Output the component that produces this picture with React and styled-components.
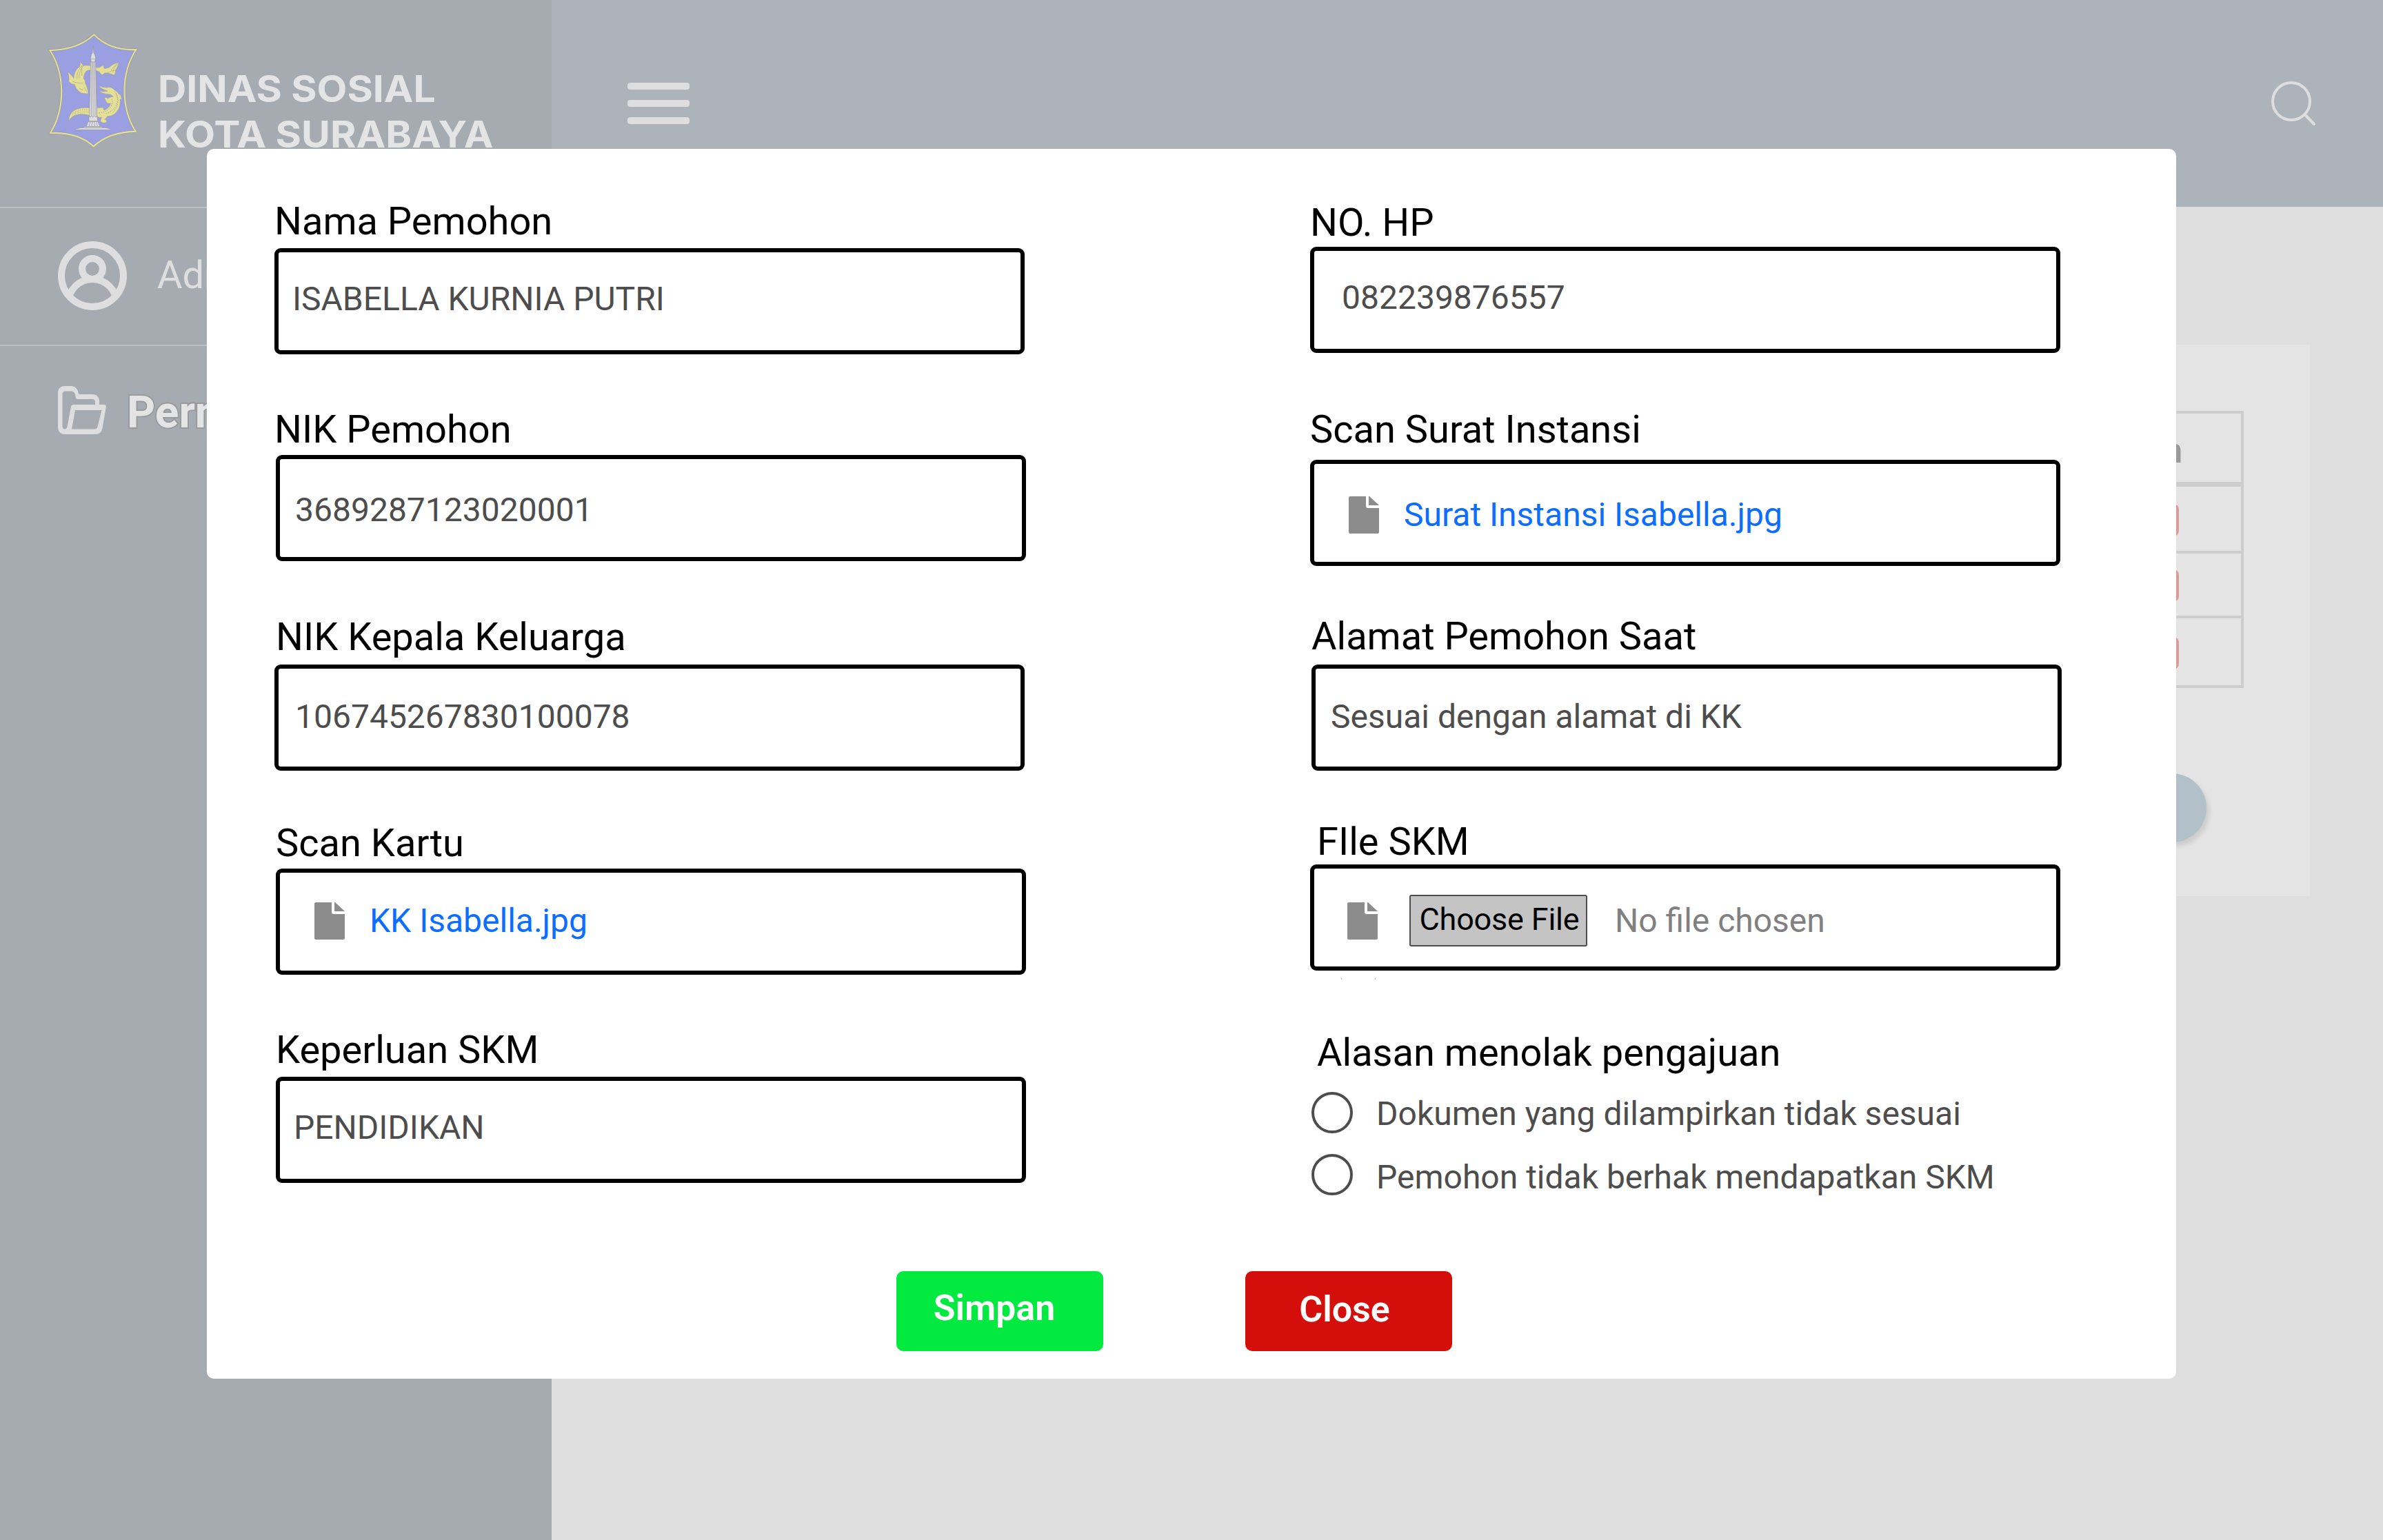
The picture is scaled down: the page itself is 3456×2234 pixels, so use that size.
import React from "react";
import styled, { createGlobalStyle } from "styled-components";

const Global = createGlobalStyle`
  * { box-sizing: border-box; }
  body {
    margin: 0;
    background: #dedede;
    font-family: Roboto, "Liberation Sans", sans-serif;
  }
`;

/* ---------- page shell ---------- */
const Page = styled.div`
  position: relative;
  display: flex;
  width: 3456px;
  height: 2234px;
  overflow: hidden;
`;
const Sidebar = styled.aside`
  flex: none;
  width: 800px;
  background: #a6abb2;
`;
const Brand = styled.div`
  display: flex;
  height: 302px;
  padding: 48px 0 0 70px;
  border-bottom: 2px solid #bdbfc1;
`;
const BrandName = styled.div`
  display: flex;
  flex-direction: column;
  align-items: flex-start;
  padding: 48px 0 0 29px;
  font: 700 53px/66px Inter, sans-serif;
  color: #e4e4e4;
`;
const BrandLine = styled.span`
  white-space: nowrap;
  transform: scaleX(${(p) => p.$stretch});
  transform-origin: left;
`;
const UserRow = styled.div`
  display: flex;
  align-items: center;
  gap: 44px;
  height: 200px;
  padding: 0 0 2px 84px;
  border-bottom: 2px solid #bdbfc1;
  font-size: 56px;
  color: #dedede;
`;
const UserName = styled.span`
  padding-bottom: 2px;
`;
const MenuRow = styled.div`
  display: flex;
  align-items: center;
  gap: 30px;
  height: 70px;
  margin: 58px 0 0 84px;
  color: #e4e4e4;
`;
const MenuText = styled.span`
  padding-top: 6px;
  font-size: 64px;
  font-weight: 700;
  -webkit-text-stroke: 4px #999a9b;
  paint-order: stroke fill;
`;
const Main = styled.main`
  display: flex;
  flex: 1;
  flex-direction: column;
  min-width: 0;
`;
const Header = styled.header`
  display: flex;
  align-items: center;
  justify-content: space-between;
  height: 300px;
  padding: 0 98px 0 110px;
  background: #adb3ba;
`;
const Burger = styled.div`
  display: flex;
  flex-direction: column;
  gap: 15px;
  width: 90px;
`;
const BurgerBar = styled.span`
  height: 10px;
  border-radius: 4px;
  background: #dedede;
`;
const Card = styled.section`
  display: flex;
  flex-direction: column;
  align-items: flex-end;
  height: 800px;
  margin: 200px 106px 0 50px;
  padding: 96px 96px 0;
  background: #e4e4e4;
`;
const Table = styled.div`
  width: 100%;
  border: 4px solid #cdcdcd;
`;
const TableRow = styled.div`
  display: flex;
  align-items: center;
  justify-content: flex-end;
  height: ${(p) => p.$height}px;
  padding-right: ${(p) => p.$end}px;
  border-bottom: ${(p) => p.$line}px solid #cdcdcd;
`;
const HeadText = styled.span`
  padding-top: 8px;
  font-size: 50px;
  font-weight: 700;
  color: #999;
`;
const RejectTag = styled.span`
  width: 160px;
  height: 47px;
  margin-top: ${(p) => p.$drop}px;
  border-radius: 8px;
  background: #d99c9c;
`;
const Pill = styled.span`
  width: 300px;
  height: 100px;
  margin: 124px 54px 0 0;
  border-radius: 50px;
  background: #b2c1c9;
  box-shadow: 4px 6px 6px rgba(0, 0, 0, 0.1);
`;

/* ---------- dialog ---------- */
const Dialog = styled.div`
  position: absolute;
  left: 300px;
  top: 216px;
  width: 2856px;
  height: 1784px;
  border-radius: 10px;
  background: #fff;
`;
const Columns = styled.div`
  display: flex;
  gap: 412px;
  height: 1628px;
  padding: 72px 0 0 98px;
`;
const Column = styled.div`
  display: flex;
  flex-direction: column;
  width: 1090px;
  padding-top: ${(p) => p.$top || 0}px;
`;
const FieldWrap = styled.div`
  margin-bottom: ${(p) => p.$after}px;
`;
const Label = styled.div`
  height: 66px;
  padding-left: ${(p) => p.$indent || 0}px;
  font-size: 56px;
  line-height: 66px;
  color: #000;
  white-space: nowrap;
`;
const Box = styled.div`
  display: flex;
  align-items: center;
  width: 1088px;
  height: 154px;
  margin: ${(p) => p.$gap}px 0 0 ${(p) => p.$shift || 0}px;
  padding: ${(p) => p.$drop || 0}px 0 ${(p) => p.$lift || 0}px ${(p) => p.$inset}px;
  border: 6px solid #000;
  border-radius: 9px;
`;
const Value = styled.span`
  font-size: 48px;
  line-height: 56px;
  color: #4d4d4d;
  white-space: nowrap;
`;
const FileLink = styled(Value)`
  margin-left: 36px;
  color: #0d6efd;
`;
const ChooseButton = styled.button`
  width: 258px;
  height: 75px;
  margin: 0 40px 0 46px;
  padding: 0 0 4px 3px;
  border: 2px solid #4d4d4d;
  border-radius: 3px;
  background: #c4c4c4;
  font: 400 45px/54px Roboto, sans-serif;
  letter-spacing: -0.2px;
  color: #000;
  white-space: nowrap;
`;
const Hint = styled(Value)`
  color: #808080;
`;
const Ticks = styled.div`
  display: flex;
  justify-content: space-between;
  width: 50px;
  height: 3px;
  margin: -76px 0 73px 45px;
`;
const Tick = styled.i`
  width: 1px;
  height: 3px;
  background: #b5b5b5;
  transform: skewX(${(p) => p.$lean}deg);
`;
const RadioRow = styled.label`
  display: flex;
  align-items: center;
  gap: 34px;
  height: 60px;
  margin: ${(p) => p.$before}px 0 0 2px;
`;
const Radio = styled.span`
  flex: none;
  width: 60px;
  height: 60px;
  border: 4px solid #4d4d4d;
  border-radius: 50%;
`;
const RadioText = styled(Value)`
  padding-top: ${(p) => p.$drop}px;
`;
const Actions = styled.div`
  display: flex;
  gap: 206px;
  padding-left: 1000px;
`;
const Action = styled.button`
  width: 300px;
  height: 116px;
  padding: 0 ${(p) => p.$right}px ${(p) => p.$lift}px 0;
  border: 0;
  border-radius: 10px;
  background: ${(p) => p.$color};
  font: 600 52px/60px Roboto, sans-serif;
  color: #fff;
`;

/* ---------- drawings ---------- */
function Crest() {
  return (
    <svg width="130" height="167" viewBox="90 54 390 501" fill="none">
      <path
        d="M289 61C334 107 391 130 472 126C405 229 405 378 470 482C398 484 335 503 287 547C241 505 178 486 99 489C164 384 164 230 97 129C180 128 241 106 289 61Z"
        fill="#999fe0" stroke="#93979c" strokeWidth="10" />
      <path
        d="M289 61C334 107 391 130 472 126C405 229 405 378 470 482C398 484 335 503 287 547C241 505 178 486 99 489C164 384 164 230 97 129C180 128 241 106 289 61Z"
        stroke="#e4df96" strokeWidth="6.5" />
      <g fill="#e4df96" stroke="#a5a58f" strokeWidth="2" strokeLinejoin="round">
        <path d="M275 196C262 194 252 194 242 196C239 190 234 184 228 179C229 188 229 194 227 200C213 208 202 226 201 251C195 240 185 230 174 223C180 240 182 252 179 263C185 273 193 276 204 277C208 291 217 305 232 314C243 317 254 317 264 318C263 300 259 285 251 272C252 264 249 258 244 252C245 235 251 221 261 216L275 216Z" />
        <path d="M296 203C304 204 312 204 316 202C320 197 326 195 333 196C330 201 331 205 335 208C346 208 356 204 364 196C374 188 384 185 397 183C393 196 388 208 383 216C383 225 381 232 376 238C366 232 355 229 345 228C335 226 329 231 327 237C320 234 316 229 312 223C306 220 301 217 296 217Z" />
        <path d="M307 283C320 288 333 291 344 291C358 287 369 291 376 300C387 307 395 314 398 320C406 322 408 330 409 343L402 342C405 365 399 384 386 399C375 412 359 417 347 416C345 422 339 427 335 429C343 432 346 437 343 443L332 445C326 445 322 443 317 439C317 432 320 427 322 422C314 421 307 420 301 418V379L331 378C329 386 330 388 335 389C350 382 359 372 361 360H349C342 355 337 345 334 334C341 334 346 336 350 339C356 333 365 330 372 331C369 324 361 320 351 320C336 319 320 314 309 306C324 308 337 309 348 306C333 302 318 294 307 283Z" />
        <path d="M271 380C244 377 219 381 204 390C188 400 179 415 180 437C188 421 198 413 213 410C231 404 251 407 271 413Z" />
      </g>
      <g stroke="#a5a58f" strokeWidth="2">
        <path d="M236 194V240M232 200C220 215 214 232 214 254M242 196C229 215 224 232 225 248M195 264C210 270 225 274 240 272M224 294L240 303M247 290L257 310M238 297V300" />
        <path d="M371 224C374 210 382 198 391 189M363 218C370 205 380 195 391 189M345 228C359 222 371 216 383 216" />
        <path d="M378 308C393 325 395 350 384 371C374 389 357 401 336 405M366 342C374 357 366 374 350 388C338 397 322 401 306 402M387 318C399 345 393 375 373 397" strokeDasharray="4 5" strokeWidth="3" />
        <path d="M264 388C238 386 210 391 193 408M264 398C240 396 218 398 202 407" strokeDasharray="2 6" strokeWidth="5" />
      </g>
      <g fill="#dfdfe1" stroke="#92939a" strokeWidth="2">
        <path d="M285 108L288 140L293 149L296 164L293 180H277L274 164L277 149L282 140Z" />
        <path d="M274 180H296L301 418H269Z" />
        <path d="M267 415L273 420L279 414L285 420L291 414L297 420L304 415V437H267Z" />
        <path d="M264 439H306L315 461H255Z" />
        <path d="M245 461H325V466H245Z" />
        <path d="M232 466H340L364 472V475H207V472Z" />
      </g>
      <path d="M280 181L277 414M285 181V414M291 181L294 414M272 440L267 460M281 440L279 460M290 440L292 460M299 440L304 460M276 167H295" stroke="#a9a9af" strokeWidth="3" />
    </svg>
  );
}

function UserIcon() {
  return (
    <svg width="100" height="100" viewBox="0 0 20 20" fill="none" stroke="#dedede" strokeWidth="2">
      <clipPath id="ring"><circle cx="10" cy="10" r="9.5" /></clipPath>
      <circle cx="10" cy="10" r="9" />
      <circle cx="10" cy="8" r="3" />
      <circle cx="10" cy="18" r="7" clipPath="url(#ring)" />
    </svg>
  );
}

function FolderIcon() {
  return (
    <svg width="70" height="70" viewBox="0 0 70 70">
      <path
        fill="#dedede" fillRule="evenodd"
        d="M10 0H19C25 0 28.500 4 29.500 9L30.500 12H50C56 12 60 16 60 22V27H66.500C69 27 70.300 28.500 69.800 31L64.500 61C63.500 67 60 70 54 70H10C4 70 0 66 0 60V10C0 4 4 0 10 0ZM10 7.500Q6.500 8 6.500 12V58Q6.500 62 9.500 62.500Q12.500 62.500 13.500 59L19 30Q19.500 27 22.500 27H54V24Q54 19 50 19H28.500Q26.500 19 26 17L24.500 11Q23 7.500 20 7.500ZM25 35L20 62.500H53Q56.500 62.500 57.500 59L63.500 35Z"
      />
    </svg>
  );
}

function SearchIcon() {
  return (
    <svg width="64" height="64" viewBox="0 0 64 64" fill="none" stroke="#dedede" strokeWidth="4" strokeLinecap="round">
      <circle cx="29" cy="29" r="27" />
      <path d="M48.500 48L62 62" />
    </svg>
  );
}

function FileIcon() {
  return (
    <svg width="44" height="54" viewBox="0 0 44 54" fill="#8c8c8c">
      <path d="M2 0H25V14Q25 17 28 17H44V52Q44 54 42 54H2Q0 54 0 52V2Q0 0 2 0Z" />
      <path d="M29 0H30L44 13H29Z" />
    </svg>
  );
}

/* ---------- parts ---------- */
function Field({ label, indent, after, children, ...box }) {
  return (
    <FieldWrap $after={after}>
      <Label $indent={indent}>{label}</Label>
      <Box $gap={box.gap} $shift={box.shift} $inset={box.inset} $drop={box.drop} $lift={box.lift}>
        {children}
      </Box>
    </FieldWrap>
  );
}

export default function App() {
  return (
    <Page>
      <Global />
      <Sidebar>
        <Brand>
          <Crest />
          <BrandName>
            <BrandLine $stretch={1.076}>DINAS SOSIAL</BrandLine>
            <BrandLine $stretch={1.08}>KOTA SURABAYA</BrandLine>
          </BrandName>
        </Brand>
        <UserRow>
          <UserIcon />
          <UserName>Admin</UserName>
        </UserRow>
        <MenuRow>
          <FolderIcon />
          <MenuText>Perm</MenuText>
        </MenuRow>
      </Sidebar>
      <Main>
        <Header>
          <Burger>
            <BurgerBar />
            <BurgerBar />
            <BurgerBar />
          </Burger>
          <SearchIcon />
        </Header>
        <Card>
          <Table>
            <TableRow $height={106} $line={7} $end={85}>
              <HeadText>Tindakan</HeadText>
            </TableRow>
            <TableRow $height={97} $line={4} $end={90}>
              <RejectTag $drop={4} />
            </TableRow>
            <TableRow $height={94} $line={4} $end={90}>
              <RejectTag $drop={2} />
            </TableRow>
            <TableRow $height={97} $line={0} $end={90}>
              <RejectTag $drop={4} />
            </TableRow>
          </Table>
          <Pill />
        </Card>
      </Main>

      <Dialog role="dialog">
        <Columns>
          <Column>
            <Field label="Nama Pemohon" gap={6} inset={20} lift={7} after={76}>
              <Value>ISABELLA KURNIA PUTRI</Value>
            </Field>
            <Field label="NIK Pemohon" gap={4} shift={2} inset={22} drop={5} after={77}>
              <Value>3689287123020001</Value>
            </Field>
            <Field label="NIK Kepala Keluarga" indent={2} gap={7} inset={24} lift={2} after={72}>
              <Value>106745267830100078</Value>
            </Field>
            <Field label="Scan Kartu" indent={2} gap={4} shift={2} inset={50} lift={3} after={76}>
              <FileIcon />
              <FileLink>KK Isabella.jpg</FileLink>
            </Field>
            <Field label="Keperluan SKM" indent={2} gap={6} shift={2} inset={20} lift={7} after={0}>
              <Value>PENDIDIKAN</Value>
            </Field>
          </Column>
          <Column $top={2}>
            <Field label="NO. HP" gap={2} inset={40} lift={7} after={78}>
              <Value>082239876557</Value>
            </Field>
            <Field label="Scan Surat Instansi" gap={11} inset={50} drop={5} after={69}>
              <FileIcon />
              <FileLink>Surat Instansi Isabella.jpg</FileLink>
            </Field>
            <Field label="Alamat Pemohon Saat" indent={2} gap={8} shift={2} inset={22} lift={3} after={70}>
              <Value>Sesuai dengan alamat di KK</Value>
            </Field>
            <Field label="FIle SKM" indent={10} gap={0} inset={48} drop={9} after={86}>
              <FileIcon />
              <ChooseButton>Choose File</ChooseButton>
              <Hint>No file chosen</Hint>
            </Field>
            <Ticks>
              <Tick $lean={20} />
              <Tick $lean={-20} />
            </Ticks>
            <Label $indent={10}>Alasan menolak pengajuan</Label>
            <RadioRow $before={24}>
              <Radio />
              <RadioText $drop={3}>Dokumen yang dilampirkan tidak sesuai</RadioText>
            </RadioRow>
            <RadioRow $before={30}>
              <Radio />
              <RadioText $drop={8}>Pemohon tidak berhak mendapatkan SKM</RadioText>
            </RadioRow>
          </Column>
        </Columns>
        <Actions>
          <Action $color="#02ea40" $right={16} $lift={8}>Simpan</Action>
          <Action $color="#d40f0b" $right={12} $lift={4}>Close</Action>
        </Actions>
      </Dialog>
    </Page>
  );
}
